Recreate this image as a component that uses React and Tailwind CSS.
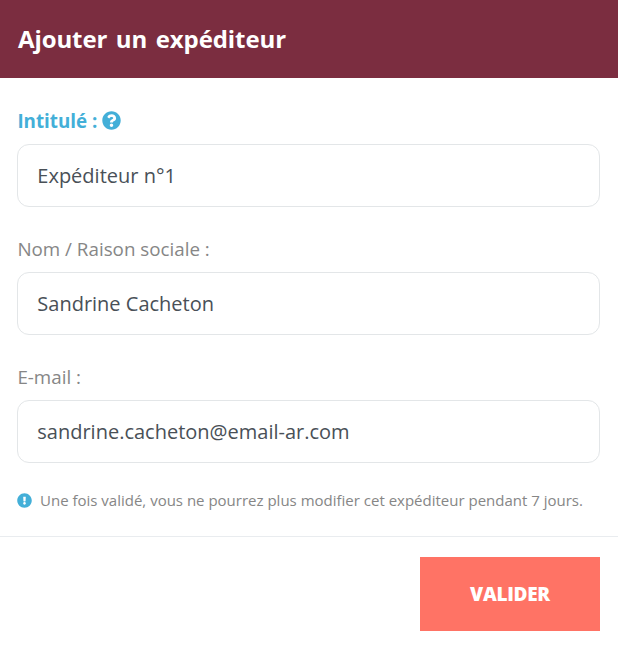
import React, { useState } from "react";
import { FaQuestionCircle, FaExclamationCircle } from "react-icons/fa";

const inputClass =
  "block w-full h-[63px] rounded-[12px] border border-[#e3e6e8] bg-white px-[19.3px] text-[20px] text-[#495057] outline-none";

const TextField = ({ id, label, type = "text", value, onChange, highlighted }) => (
  <div>
    <label
      htmlFor={id}
      className={`flex items-center h-[30px] mb-2 pl-[0.4px] text-[18.8px] ${
        highlighted ? "font-bold text-[#43afd8]" : "text-[#868686]"
      }`}
    >
      {label}
      {highlighted && <FaQuestionCircle className="ml-[4.6px] mb-px w-[19px] h-[19px]" />}
    </label>
    <input id={id} type={type} value={value} onChange={onChange} className={inputClass} />
  </div>
);

const App = () => {
  const [sender, setSender] = useState({
    title: "Expéditeur n°1",
    name: "Sandrine Cacheton",
    email: "sandrine.cacheton@email-ar.com",
  });

  const handleChange = (field) => (e) => {
    setSender((prev) => ({ ...prev, [field]: e.target.value }));
  };

  return (
    <form
      onSubmit={(e) => e.preventDefault()}
      className="w-full h-screen overflow-hidden bg-white font-['Open_Sans',sans-serif]"
    >
      <header className="flex items-center h-[78px] px-[18px] bg-[#7b2d40]">
        <h1 className="text-[24px] font-bold [word-spacing:2.4px] tracking-[-0.1px] text-white">Ajouter un expéditeur</h1>
      </header>

      <div className="flex flex-col gap-[27px] px-[17px] pr-[18px] pt-7">
        <TextField id="title" label="Intitulé :" value={sender.title} onChange={handleChange("title")} highlighted />
        <TextField id="name" label="Nom / Raison sociale :" value={sender.name} onChange={handleChange("name")} />
        <TextField id="email" label="E-mail :" type="email" value={sender.email} onChange={handleChange("email")} />
      </div>

      <p className="flex items-center h-[24px] mt-[25px] mb-[24px] px-[17px] text-[15px] text-[#868686] whitespace-nowrap">
        <FaExclamationCircle className="mr-2 w-[15px] h-[15px] shrink-0 text-[#43afd8]" />
        Une fois validé, vous ne pourrez plus modifier cet expéditeur pendant 7 jours.
      </p>

      <footer className="flex justify-end border-t border-[#e9ecef] pt-5 pr-[18px]">
        <button
          type="submit"
          className="w-[180px] h-[74px] bg-[#ff7365] text-[19px] font-extrabold tracking-[-0.3px] text-white"
        >
          VALIDER
        </button>
      </footer>
    </form>
  );
};

export default App;
